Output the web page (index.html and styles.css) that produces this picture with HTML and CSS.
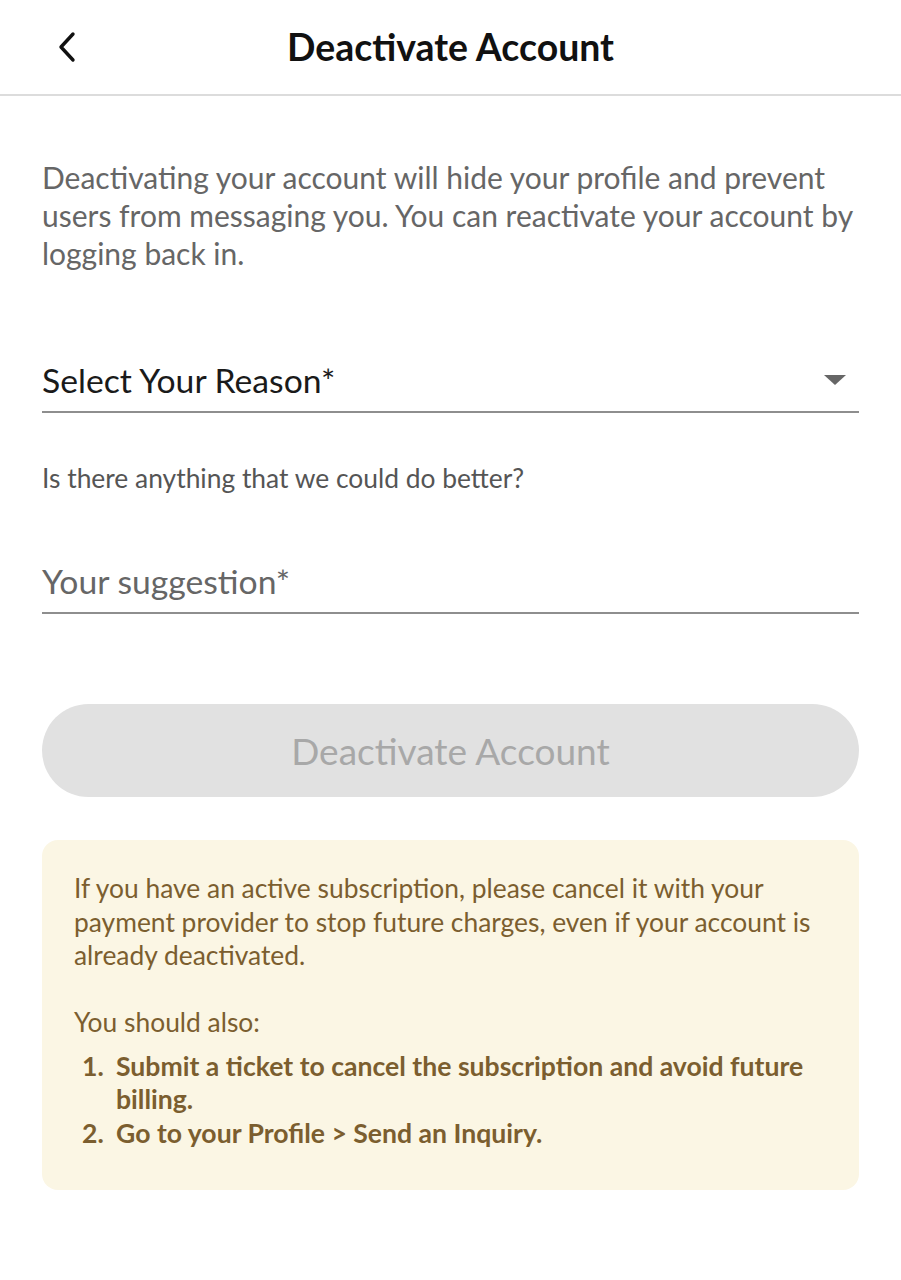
FILE: index.html
```html
<!DOCTYPE html>
<html lang="en">
<head>
<meta charset="utf-8">
<title>Deactivate Account</title>
<link rel="stylesheet" href="styles.css">
</head>
<body>
<header class="topbar">
  <button class="back" aria-label="Back">
    <svg width="22" height="32" viewBox="0 0 22 32"><path d="M17 3 L5 16 L17 29" fill="none" stroke="#111" stroke-width="3.4" stroke-linecap="round" stroke-linejoin="round"/></svg>
  </button>
  <h1 class="title">Deactivate Account</h1>
</header>
<main class="content">
  <p class="intro">Deactivating your account will hide your profile and prevent users from messaging you. You can reactivate your account by logging back in.</p>
  <div class="field select-field">
    <span class="select-label">Select Your Reason*</span>
    <span class="caret"></span>
  </div>
  <p class="question">Is there anything that we could do better?</p>
  <div class="field input-field">
    <span class="placeholder">Your suggestion*</span>
  </div>
  <button class="deactivate" disabled>Deactivate Account</button>
  <section class="notice">
    <p class="notice-text">If you have an active subscription, please cancel it with your payment provider to stop future charges, even if your account is already deactivated.</p>
    <p class="notice-text also">You should also:</p>
    <ol class="steps">
      <li>Submit a ticket to cancel the subscription and avoid future billing.</li>
      <li>Go to your Profile &gt; Send an Inquiry.</li>
    </ol>
  </section>
</main>
</body>
</html>
```
FILE: styles.css
```css
* { box-sizing: border-box; }
html, body { margin: 0; padding: 0; background: #fff; }
body { font-family: Lato, "Open Sans", sans-serif; color: #222; width: 901px; }

.topbar {
  position: relative;
  height: 96px;
  display: flex;
  align-items: center;
  justify-content: center;
  border-bottom: 2px solid #dcdcdc;
}
.back {
  position: absolute;
  left: 56px;
  top: 31px;
  width: 22px;
  height: 32px;
  padding: 0;
  border: 0;
  background: none;
  display: flex;
}
.title {
  margin: 0;
  font-size: 37.4px;
  font-weight: 700;
  color: #111;
  padding-bottom: 2px;
}

.content { padding: 62px 42px 0; }

.intro {
  margin: 0;
  font-size: 30px;
  line-height: 38px;
  color: #666;
}

.field {
  display: flex;
  align-items: center;
  justify-content: space-between;
  border-bottom: 2px solid #8e8e8e;
  height: 57px;
  padding-bottom: 8px;
}
.select-field { margin-top: 84px; }
.select-label { font-size: 33.7px; color: #1a1a1a; }
.caret {
  width: 0; height: 0;
  margin-right: 13px;
  border-left: 11px solid transparent;
  border-right: 11px solid transparent;
  border-top: 10px solid #666;
}

.question {
  margin: 50px 0 0;
  font-size: 26.4px;
  line-height: 30px;
  color: #555;
}

.input-field { margin-top: 64px; }
.placeholder { font-size: 33.7px; color: #666; }

.deactivate {
  display: block;
  width: 100%;
  margin-top: 90px;
  height: 93px;
  border: 0;
  border-radius: 47px;
  background: #e1e1e1;
  color: #a8a8a8;
  font-family: inherit;
  font-size: 37px;
}

.notice {
  margin-top: 43px;
  background: #fbf6e4;
  border-radius: 16px;
  padding: 32px 32px 40px;
  color: #7b5e2f;
}
.notice-text {
  margin: 0;
  font-size: 26.4px;
  line-height: 33.5px;
}
.also { margin-top: 33.5px; }
.steps {
  list-style: none;
  counter-reset: step;
  margin: 10px 0 0;
  padding: 0 0 0 8px;
  font-size: 26.6px;
  line-height: 33.5px;
  font-weight: 700;
}
.steps li {
  counter-increment: step;
  display: flex;
}
.steps li::before {
  content: counter(step) ".";
  flex: 0 0 34px;
}
```
